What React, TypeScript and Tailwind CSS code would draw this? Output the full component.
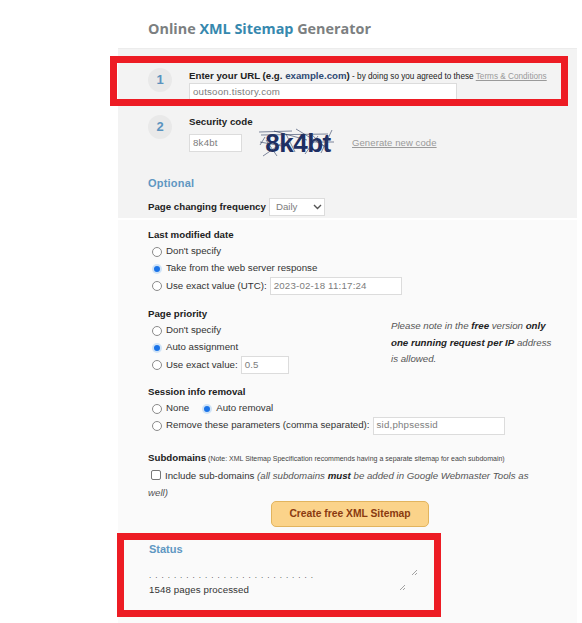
const Radio = ({ on }: { on?: boolean }) => (
  <span
    className={
      on
        ? "w-[10px] h-[10px] rounded-full bg-[#1a73e8] border-2 border-[#cfe3f7] shrink-0 inline-block"
        : "w-[10px] h-[10px] rounded-full bg-white border border-[#8a8a8a] shrink-0 inline-block"
    }
  />
);

const Field = ({ value, className }: { value: string; className: string }) => (
  <div className={"h-[18px] bg-white border border-[#dcdcdc] pl-[3px] flex items-center text-[#7d7d7d] text-[9.7px] tracking-[0.2px] " + className}>
    {value}
  </div>
);

const Step = ({ n }: { n: number }) => (
  <div className="w-6 h-6 rounded-full bg-[#e9e9e9] flex items-center justify-center text-[13px] font-bold text-[#5b93bf] shrink-0">
    {n}
  </div>
);

const Handle = ({ className }: { className: string }) => (
  <svg width="7" height="7" viewBox="0 0 7 7" className={"absolute " + className}>
    <path d="M1 6 6 1M4 6 6 4" stroke="#8c8c8c" strokeWidth="0.8" fill="none" />
  </svg>
);

export default function App() {
  return (
    <div className="relative w-[582px] h-[623px] bg-white overflow-hidden font-['Liberation_Sans',Arial,sans-serif] text-[9.7px] text-[#222]">
      <div className="h-[48px] pl-[148px] pt-[19px]">
        <h1 className="font-['Open_Sans',sans-serif] font-bold text-[14.4px] leading-[20px] text-[#7c7f81]">
          Online <span className="text-[#3688ae]">XML Sitemap</span> Generator
        </h1>
      </div>

      <div className="ml-[118px] w-[459px] border-t border-[#ececec]">
        <div className="h-[169px] bg-[#f3f3f3] pl-[30px]">
          <div className="flex h-[66px] pt-[19px]">
            <Step n={1} />
            <div className="ml-[17px] mt-[1px] w-[380px]">
              <div className="whitespace-nowrap leading-[13px]">
                <span className="font-bold text-[9.7px] text-[#222]">
                  Enter your URL (e.g. <span className="text-[#2f4a73]">example.com</span>)
                </span>
                <span className="text-[8.2px]"> - by doing so you agreed to these </span>
                <span className="text-[8.2px] text-[#9a9a9a] underline">Terms &amp; Conditions</span>
              </div>
              <Field value="outsoon.tistory.com" className="w-[268px]" />
            </div>
          </div>

          <div className="flex h-[61px]">
            <Step n={2} />
            <div className="ml-[17px]">
              <div className="font-bold text-[9.7px] leading-[13px]">Security code</div>
              <div className="flex items-center h-[30px]">
                <Field value="8k4bt" className="w-[53px]" />
                <div className="relative w-[77px] h-[30px] ml-[16px] pl-[3px] flex items-center justify-center font-bold text-[26px] text-[#1e2f63] tracking-[-0.5px]">
                  8k4bt
                  <svg width="77" height="30" viewBox="0 0 77 30" className="absolute inset-0">
                    <path
                      d="M1 4 34 3M3 7 70 6M7 9 2 17M5 28 24 15M8 12 19 28M38 1 66 18M52 5 72 24M63 25 74 2M16 3 49 12M2 14 24 18M55 14 76 14M47 26 60 8M28 6 37 24"
                      stroke="#2c3a5e"
                      strokeWidth="0.6"
                      fill="none"
                    />
                  </svg>
                </div>
                <span className="ml-[17px] text-[#9a9a9a] underline text-[9.5px] tracking-[0.1px] mt-[1px]">Generate new code</span>
              </div>
            </div>
          </div>

          <div className="font-bold text-[11px] leading-[14px] text-[#5f97c2] tracking-[0.2px] h-[16px]">Optional</div>
          <div className="flex items-center h-[18px] mt-[6px]">
            <span className="font-bold text-[9.7px] text-[#222]">Page changing frequency</span>
            <div className="ml-[3px] w-[56px] h-[18px] bg-white border border-[#dcdcdc] flex items-center justify-between pl-[6px] pr-[2px] text-[#7d7d7d]">
              Daily
              <svg width="9" height="6" viewBox="0 0 9 6">
                <path d="M1 1 4.5 4.5 8 1" stroke="#555" strokeWidth="1.4" fill="none" />
              </svg>
            </div>
          </div>
        </div>

        <div className="h-[404px] bg-[#fafafa] mt-[2px] pl-[30px] pt-[9px] relative">
          <div className="font-bold leading-[12px] h-[14px]">Last modified date</div>
          <div className="pl-[4px] text-[#333]">
            <div className="flex items-center gap-[4px] h-[17px]"><Radio /> Don't specify</div>
            <div className="flex items-center gap-[4px] h-[17px]"><Radio on /> Take from the web server response</div>
            <div className="flex items-center gap-[4px] h-[18px]">
              <Radio /> Use exact value (UTC):
              <Field value="2023-02-18 11:17:24" className="w-[132px] -ml-[1px]" />
            </div>
          </div>

          <div className="font-bold leading-[12px] h-[14px] mt-[13px]">Page priority</div>
          <div className="flex">
            <div className="pl-[4px] w-[243px] text-[#333]">
              <div className="flex items-center gap-[4px] h-[17px]"><Radio /> Don't specify</div>
              <div className="flex items-center gap-[4px] h-[17px]"><Radio on /> Auto assignment</div>
              <div className="flex items-center gap-[4px] h-[18px]">
                <Radio /> Use exact value:
                <Field value="0.5" className="w-[48px] -ml-[1px]" />
              </div>
            </div>
            <div className="italic text-[#555] leading-[16.5px] w-[170px] -mt-[4px] whitespace-nowrap">
              <div>Please note in the <b className="text-[#222]">free</b> version <b className="text-[#222]">only</b></div>
              <div><b className="text-[#222]">one running request per IP</b> address</div>
              <div>is allowed.</div>
            </div>
          </div>

          <div className="font-bold leading-[12px] h-[14px] mt-[12px]">Session info removal</div>
          <div className="pl-[4px] text-[#333]">
            <div className="flex items-center gap-[4px] h-[17px]">
              <Radio /> None <span className="w-[5px]" /> <Radio on /> Auto removal
            </div>
            <div className="flex items-center gap-[4px] h-[17px]">
              <Radio /> Remove these parameters (comma separated):
              <Field value="sid,phpsessid" className="w-[132px] -ml-[1px]" />
            </div>
          </div>

          <div className="mt-[17px] h-[14px] leading-[14px] whitespace-nowrap">
            <b>Subdomains</b>
            <span className="text-[7px] text-[#444]"> (Note: XML Sitemap Specification recommends having a separate sitemap for each subdomain)</span>
          </div>
          <div className="mt-[2px] leading-[17px] text-[#333] whitespace-nowrap">
            <span className="inline-block w-[10px] h-[10px] bg-white border border-[#777] rounded-[2px] ml-[3px] mr-[4px] align-[-1px]" />
            Include sub-domains <i className="text-[#555]">(all subdomains <b className="text-[#222]">must</b> be added in Google Webmaster Tools as</i>
          </div>
          <div className="leading-[17px] italic text-[#555]">well)</div>

          <div className="ml-[123px] w-[158px] h-[26px] rounded-[5px] border border-[#e2b45e] bg-[#fbd38a] flex items-center justify-center font-bold text-[10.3px] text-[#8a3a10]">
            Create free XML Sitemap
          </div>

          <div className="font-bold text-[11px] leading-[14px] text-[#5f97c2] mt-[15px] pl-[1px]">Status</div>
          <div className="relative mt-[13px] w-[270px] text-[#333] pl-[1px]">
            <div className="leading-[14px] tracking-[4px] text-[8px]">...........................</div>
            <div className="leading-[13px] tracking-[0.1px]">1548 pages processed</div>
            <Handle className="left-[263px] top-[0px]" />
            <Handle className="left-[251px] top-[15px]" />
          </div>
        </div>
      </div>

      <div className="absolute left-[110px] top-[56px] w-[458px] h-[50px] border-[7px] border-[#ed1c24]" />
      <div className="absolute left-[117px] top-[533px] w-[324px] h-[84px] border-[7px] border-[#ed1c24]" />
    </div>
  );
}
